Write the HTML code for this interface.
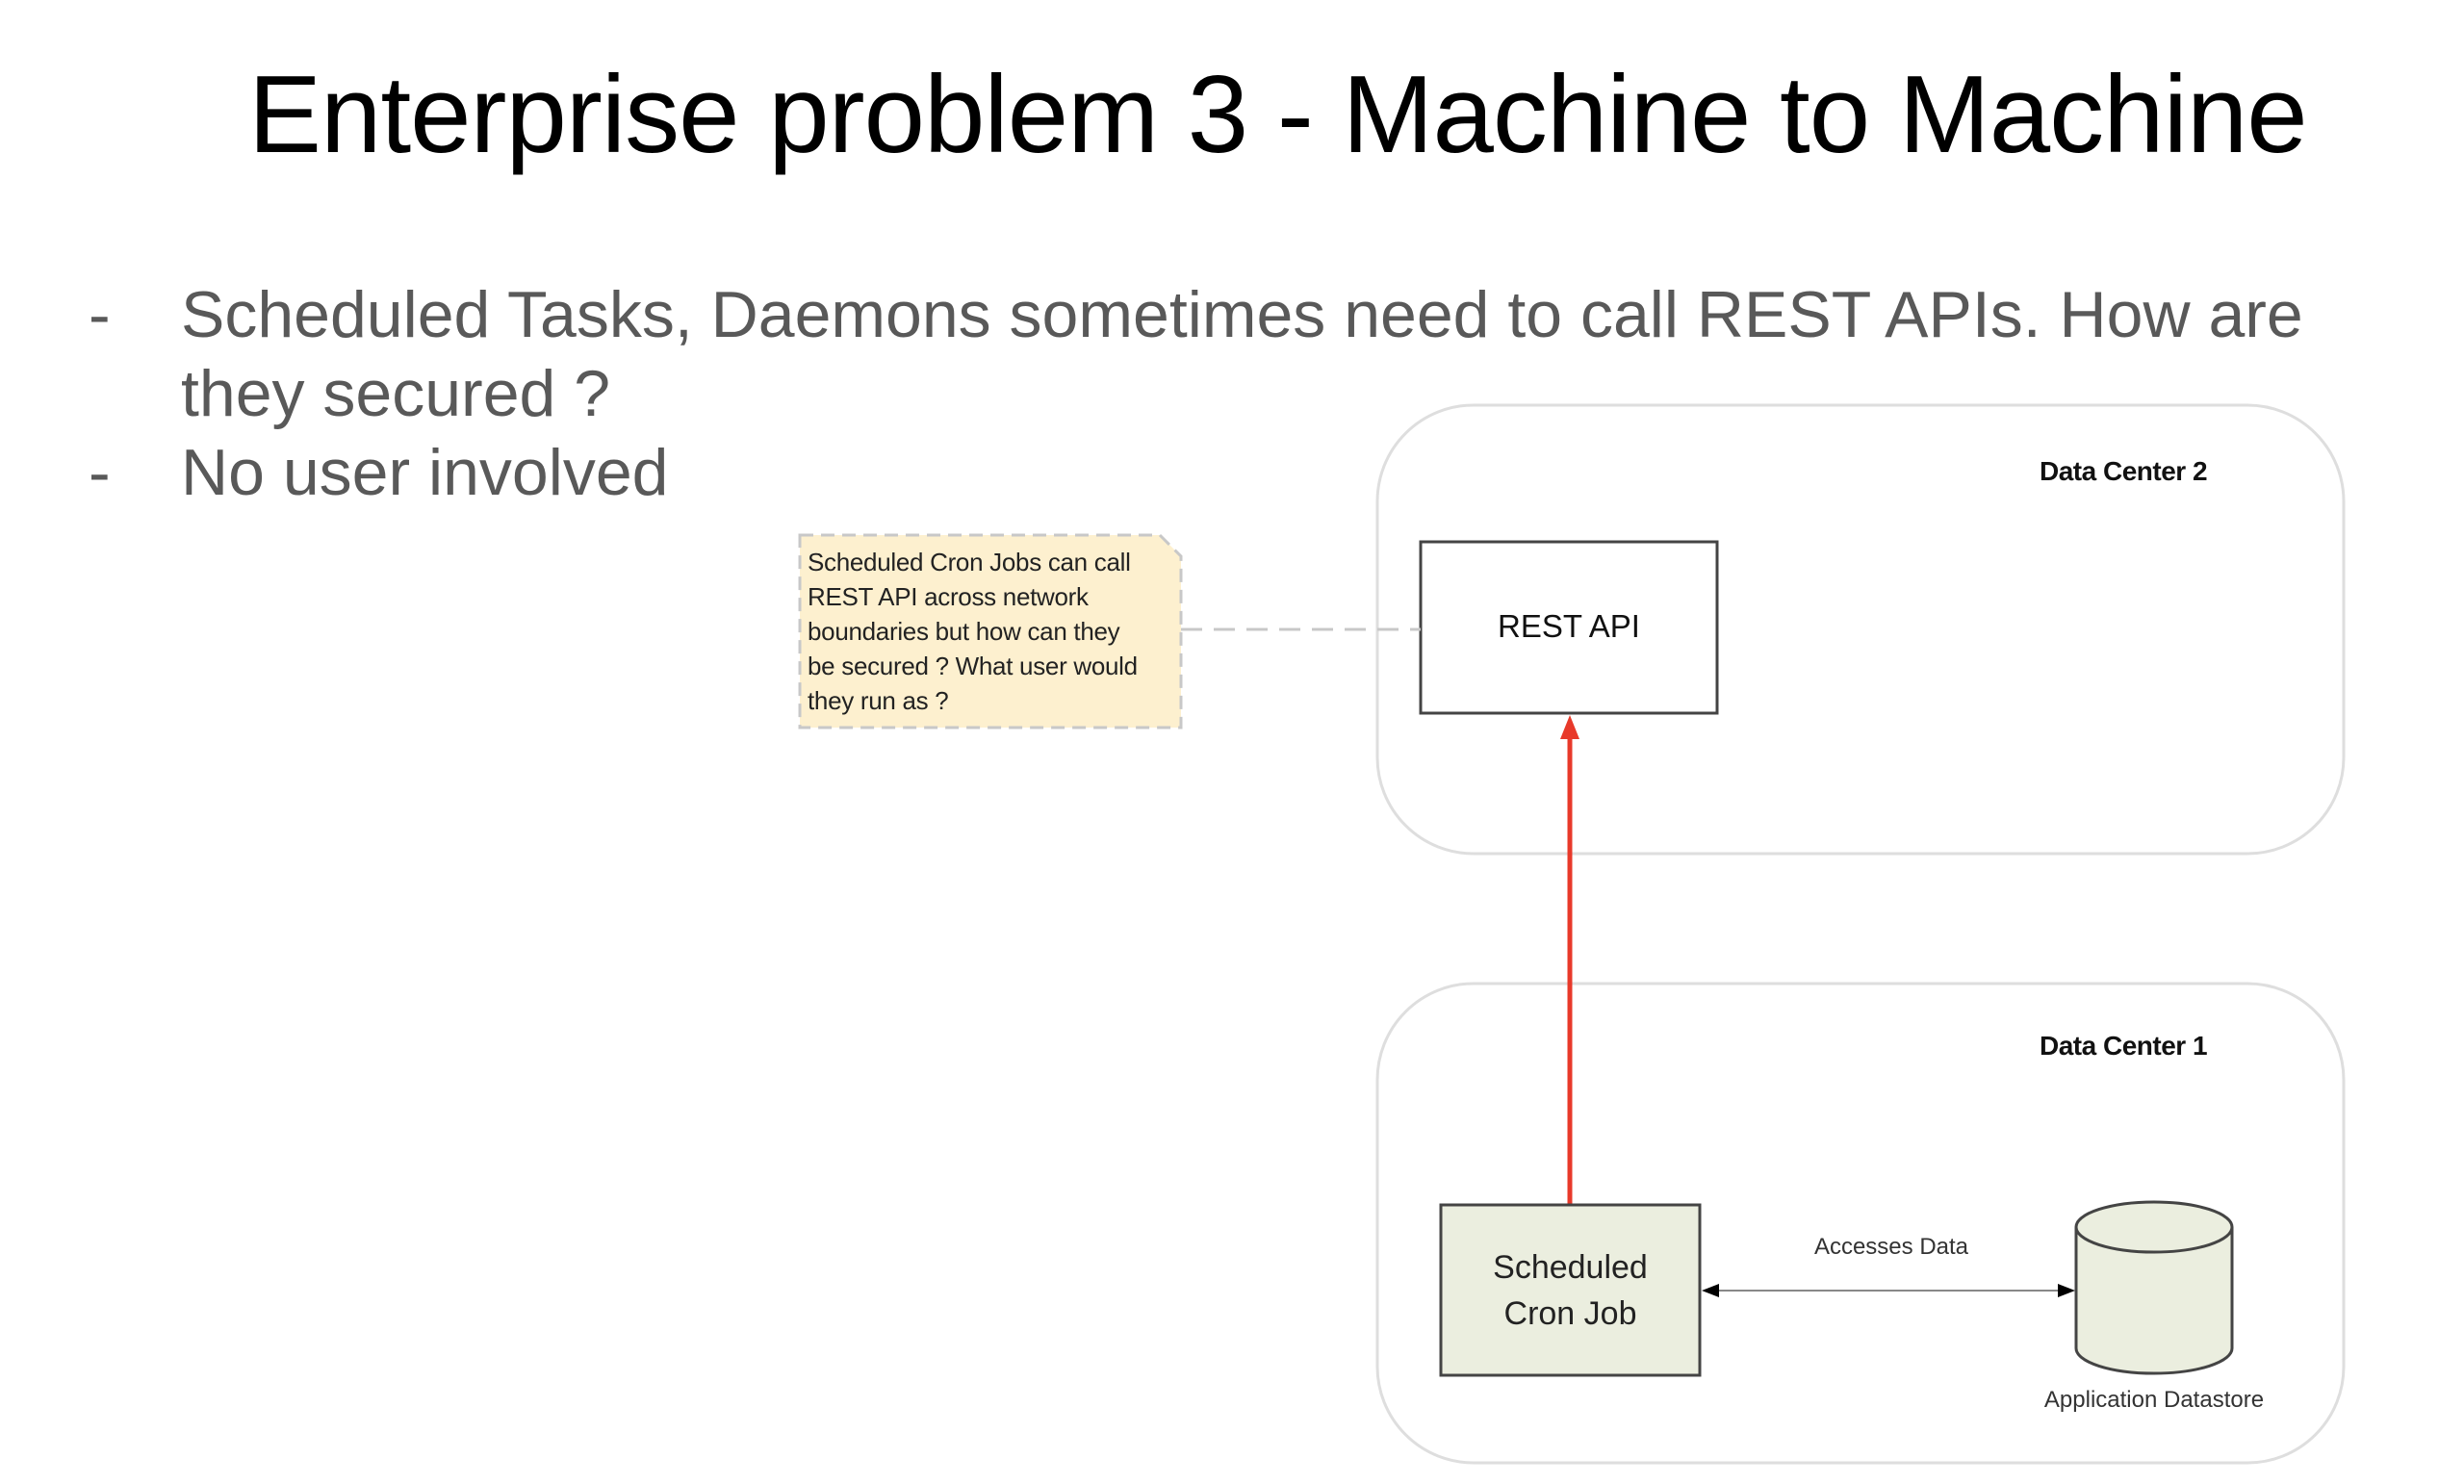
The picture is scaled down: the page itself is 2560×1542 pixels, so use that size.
<!DOCTYPE html>
<html><head><meta charset="utf-8"><style>
body{margin:0;width:2560px;height:1542px;background:#fff;position:relative;overflow:hidden;font-family:"Liberation Sans",sans-serif}
.t{position:absolute;white-space:nowrap}
</style></head><body>
<div class="t" style="left:258px;top:50px;font-size:114px;color:#000;line-height:140px;letter-spacing:-1px">Enterprise problem 3 - Machine to Machine</div>
<div class="t" style="left:92px;top:286px;font-size:68px;color:#595959;line-height:82px">-</div>
<div class="t" style="left:188px;top:286px;font-size:68px;color:#595959;line-height:82px">Scheduled Tasks, Daemons sometimes need to call REST APIs. How are<br>they secured ?</div>
<div class="t" style="left:92px;top:450px;font-size:68px;color:#595959;line-height:82px">-</div>
<div class="t" style="left:188px;top:450px;font-size:68px;color:#595959;line-height:82px">No user involved</div>
<svg width="2560" height="1542" style="position:absolute;left:0;top:0">
<rect x="1431" y="421" width="1004" height="466" rx="100" fill="none" stroke="#dedede" stroke-width="3"/>
<rect x="1431" y="1022" width="1004" height="498" rx="100" fill="none" stroke="#dedede" stroke-width="3"/>
<rect x="1476" y="563" width="308" height="178" fill="#fff" stroke="#444" stroke-width="3"/>
<path d="M831 556 L1205 556 L1227 578 L1227 756 L831 756 Z" fill="#fdf0cf" stroke="#c8c8c8" stroke-width="3" stroke-dasharray="14 8"/>
<line x1="1227" y1="654" x2="1476" y2="654" stroke="#c8c8c8" stroke-width="3" stroke-dasharray="22 12"/>
<line x1="1631" y1="1253" x2="1631" y2="763" stroke="#e8392a" stroke-width="5"/>
<polygon points="1631,743 1621,768 1641,768" fill="#e8392a"/>
<rect x="1497" y="1252" width="269" height="177" fill="#ebeedf" stroke="#444" stroke-width="3"/>
<line x1="1782" y1="1341" x2="2140" y2="1341" stroke="#888" stroke-width="2"/>
<polygon points="1768,1341 1786,1334 1786,1348" fill="#000"/>
<polygon points="2156,1341 2138,1334 2138,1348" fill="#000"/>
<path d="M2157 1275 L2157 1401 A81 26 0 0 0 2319 1401 L2319 1275" fill="#ebeedf" stroke="#444" stroke-width="3"/>
<ellipse cx="2238" cy="1275" rx="81" ry="26" fill="#ebeedf" stroke="#444" stroke-width="3"/>
</svg>
<div class="t" style="left:2119px;top:474px;font-size:28px;font-weight:bold;color:#111;letter-spacing:-0.5px">Data Center 2</div>
<div class="t" style="left:2119px;top:1071px;font-size:28px;font-weight:bold;color:#111;letter-spacing:-0.5px">Data Center 1</div>
<div class="t" style="left:1476px;width:308px;top:632px;text-align:center;font-size:33px;color:#111">REST API</div>
<div class="t" style="left:839px;top:566px;font-size:26px;line-height:36px;color:#222;letter-spacing:-0.3px">Scheduled Cron Jobs can call<br>REST API across network<br>boundaries but how can they<br>be secured ? What user would<br>they run as ?</div>
<div class="t" style="left:1497px;width:269px;top:1293px;text-align:center;font-size:34px;line-height:48px;color:#222">Scheduled<br>Cron Job</div>
<div class="t" style="left:1865px;width:200px;top:1282px;text-align:center;font-size:24px;color:#333">Accesses Data</div>
<div class="t" style="left:2088px;width:300px;top:1441px;text-align:center;font-size:24px;color:#333">Application Datastore</div>
</body></html>
